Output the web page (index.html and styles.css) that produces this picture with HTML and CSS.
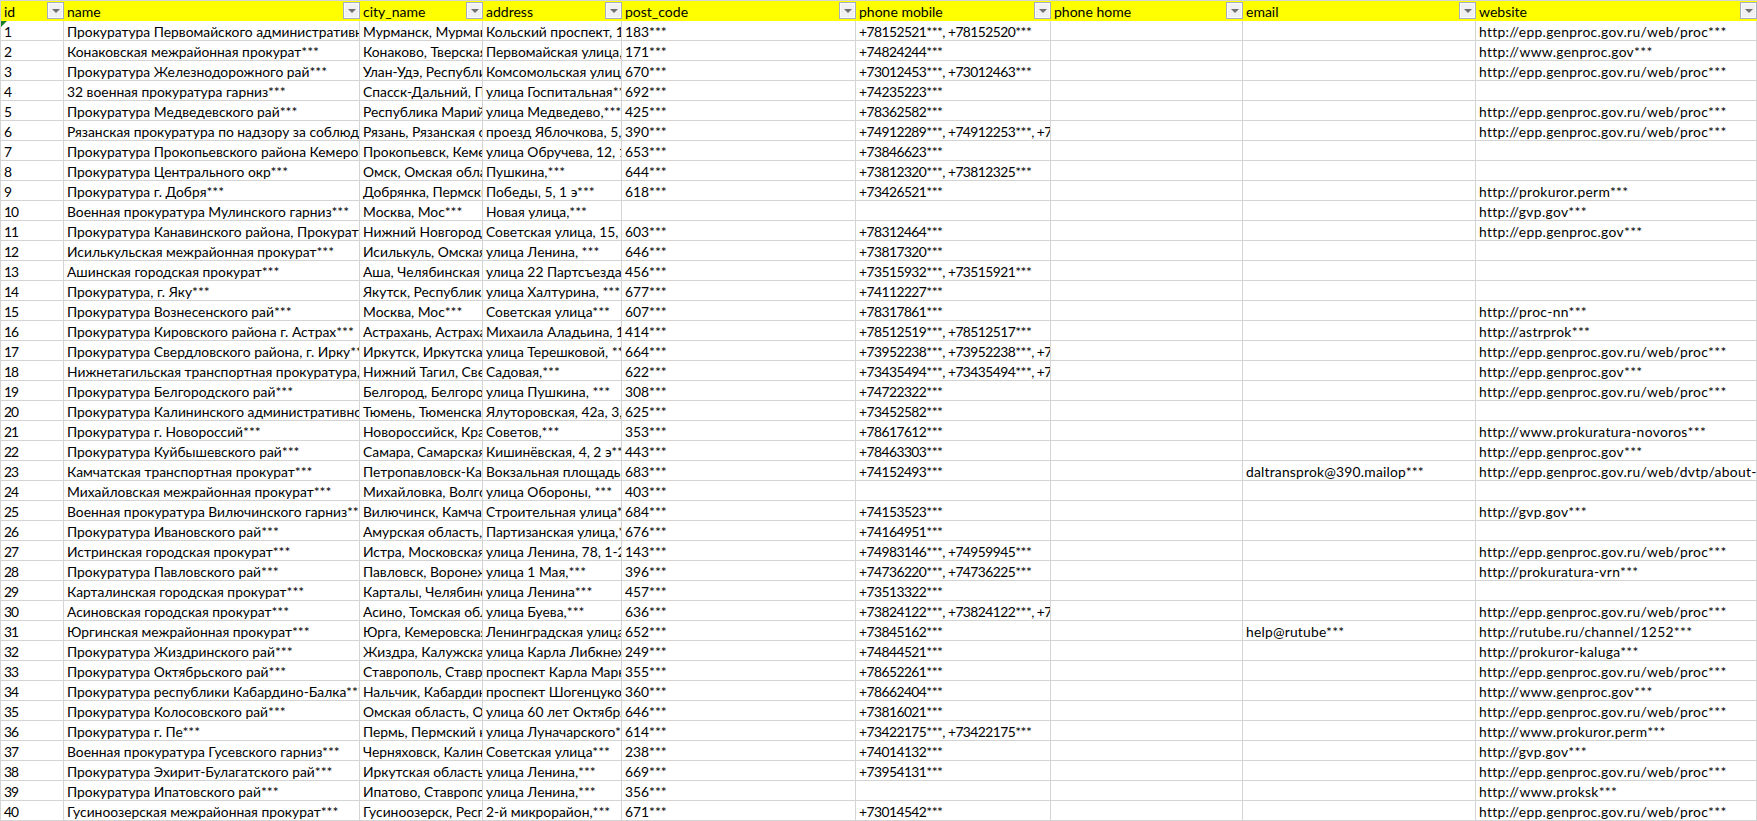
FILE: index.html
```html
<!DOCTYPE html>
<html lang="ru">
<head>
<meta charset="utf-8">
<title>Прокуратуры</title>
<link rel="stylesheet" href="styles.css">
</head>
<body>
<table class="sheet">
<colgroup><col class="c-id"><col class="c-name"><col class="c-city"><col class="c-addr"><col class="c-post"><col class="c-mob"><col class="c-home"><col class="c-mail"><col class="c-web"></colgroup>
<thead><tr>
<th><div class="hd"><span class="lbl">id</span><span class="fb"></span></div></th>
<th><div class="hd"><span class="lbl">name</span><span class="fb"></span></div></th>
<th><div class="hd"><span class="lbl">city_name</span><span class="fb"></span></div></th>
<th><div class="hd"><span class="lbl">address</span><span class="fb"></span></div></th>
<th><div class="hd"><span class="lbl">post_code</span><span class="fb"></span></div></th>
<th><div class="hd"><span class="lbl">phone mobile</span><span class="fb"></span></div></th>
<th><div class="hd"><span class="lbl">phone home</span><span class="fb"></span></div></th>
<th><div class="hd"><span class="lbl">email</span><span class="fb"></span></div></th>
<th><div class="hd"><span class="lbl">website</span><span class="fb"></span></div></th>
</tr></thead>
<tbody>
<tr><td class="first">1</td><td>Прокуратура Первомайского административного</td><td>Мурманск, Мурманская</td><td>Кольский проспект, 1</td><td>183***</td><td>+78152521***, +78152520***</td><td></td><td></td><td>http://epp.genproc.gov.ru/web/proc***</td></tr>
<tr><td>2</td><td>Конаковская межрайонная прокурат***</td><td>Конаково, Тверская</td><td>Первомайская улица, 1</td><td>171***</td><td>+74824244***</td><td></td><td></td><td>http://www.genproc.gov***</td></tr>
<tr><td>3</td><td>Прокуратура Железнодорожного рай***</td><td>Улан-Удэ, Республика</td><td>Комсомольская улица, 1</td><td>670***</td><td>+73012453***, +73012463***</td><td></td><td></td><td>http://epp.genproc.gov.ru/web/proc***</td></tr>
<tr><td>4</td><td>32 военная прокуратура гарниз***</td><td>Спасск-Дальний, Приморский</td><td>улица Госпитальная***</td><td>692***</td><td>+74235223***</td><td></td><td></td><td></td></tr>
<tr><td>5</td><td>Прокуратура Медведевского рай***</td><td>Республика Марий Эл</td><td>улица Медведево,***</td><td>425***</td><td>+78362582***</td><td></td><td></td><td>http://epp.genproc.gov.ru/web/proc***</td></tr>
<tr><td>6</td><td>Рязанская прокуратура по надзору за соблюдением</td><td>Рязань, Рязанская область</td><td>проезд Яблочкова, 5, 1</td><td>390***</td><td>+74912289***, +74912253***, +74912253***</td><td></td><td></td><td>http://epp.genproc.gov.ru/web/proc***</td></tr>
<tr><td>7</td><td>Прокуратура Прокопьевского района Кемеровской</td><td>Прокопьевск, Кемеровская</td><td>улица Обручева, 12, 1</td><td>653***</td><td>+73846623***</td><td></td><td></td><td></td></tr>
<tr><td>8</td><td>Прокуратура Центрального окр***</td><td>Омск, Омская область</td><td>Пушкина,***</td><td>644***</td><td>+73812320***, +73812325***</td><td></td><td></td><td></td></tr>
<tr><td>9</td><td>Прокуратура г. Добря***</td><td>Добрянка, Пермский</td><td>Победы, 5, 1 э***</td><td>618***</td><td>+73426521***</td><td></td><td></td><td>http://prokuror.perm***</td></tr>
<tr><td>10</td><td>Военная прокуратура Мулинского гарниз***</td><td>Москва, Мос***</td><td>Новая улица,***</td><td></td><td></td><td></td><td></td><td>http://gvp.gov***</td></tr>
<tr><td>11</td><td>Прокуратура Канавинского района, Прокуратура</td><td>Нижний Новгород, Нижегородская</td><td>Советская улица, 15, 2</td><td>603***</td><td>+78312464***</td><td></td><td></td><td>http://epp.genproc.gov***</td></tr>
<tr><td>12</td><td>Исилькульская межрайонная прокурат***</td><td>Исилькуль, Омская</td><td>улица Ленина, ***</td><td>646***</td><td>+73817320***</td><td></td><td></td><td></td></tr>
<tr><td>13</td><td>Ашинская городская прокурат***</td><td>Аша, Челябинская область</td><td>улица 22 Партсъезда***</td><td>456***</td><td>+73515932***, +73515921***</td><td></td><td></td><td></td></tr>
<tr><td>14</td><td>Прокуратура, г. Яку***</td><td>Якутск, Республика Саха</td><td>улица Халтурина, ***</td><td>677***</td><td>+74112227***</td><td></td><td></td><td></td></tr>
<tr><td>15</td><td>Прокуратура Вознесенского рай***</td><td>Москва, Мос***</td><td>Советская улица***</td><td>607***</td><td>+78317861***</td><td></td><td></td><td>http://proc-nn***</td></tr>
<tr><td>16</td><td>Прокуратура Кировского района г. Астрах***</td><td>Астрахань, Астраханская</td><td>Михаила Аладьина, 1</td><td>414***</td><td>+78512519***, +78512517***</td><td></td><td></td><td>http://astrprok***</td></tr>
<tr><td>17</td><td>Прокуратура Свердловского района, г. Ирку***</td><td>Иркутск, Иркутская</td><td>улица Терешковой, ***</td><td>664***</td><td>+73952238***, +73952238***, +73952238***</td><td></td><td></td><td>http://epp.genproc.gov.ru/web/proc***</td></tr>
<tr><td>18</td><td>Нижнетагильская транспортная прокуратура,</td><td>Нижний Тагил, Свердловская</td><td>Садовая,***</td><td>622***</td><td>+73435494***, +73435494***, +73435494***</td><td></td><td></td><td>http://epp.genproc.gov***</td></tr>
<tr><td>19</td><td>Прокуратура Белгородского рай***</td><td>Белгород, Белгородская</td><td>улица Пушкина, ***</td><td>308***</td><td>+74722322***</td><td></td><td></td><td>http://epp.genproc.gov.ru/web/proc***</td></tr>
<tr><td>20</td><td>Прокуратура Калининского административного</td><td>Тюмень, Тюменская область</td><td>Ялуторовская, 42а, 3, 1</td><td>625***</td><td>+73452582***</td><td></td><td></td><td></td></tr>
<tr><td>21</td><td>Прокуратура г. Новороссий***</td><td>Новороссийск, Краснодарский</td><td>Советов,***</td><td>353***</td><td>+78617612***</td><td></td><td></td><td>http://www.prokuratura-novoros***</td></tr>
<tr><td>22</td><td>Прокуратура Куйбышевского рай***</td><td>Самара, Самарская область</td><td>Кишинёвская, 4, 2 э***</td><td>443***</td><td>+78463303***</td><td></td><td></td><td>http://epp.genproc.gov***</td></tr>
<tr><td>23</td><td>Камчатская транспортная прокурат***</td><td>Петропавловск-Камчатский</td><td>Вокзальная площадь, 1</td><td>683***</td><td>+74152493***</td><td></td><td>daltransprok@390.mailop***</td><td>http://epp.genproc.gov.ru/web/dvtp/about-</td></tr>
<tr><td>24</td><td>Михайловская межрайонная прокурат***</td><td>Михайловка, Волгоградская</td><td>улица Обороны, ***</td><td>403***</td><td></td><td></td><td></td><td></td></tr>
<tr><td>25</td><td>Военная прокуратура Вилючинского гарниз***</td><td>Вилючинск, Камчатский</td><td>Строительная улица***</td><td>684***</td><td>+74153523***</td><td></td><td></td><td>http://gvp.gov***</td></tr>
<tr><td>26</td><td>Прокуратура Ивановского рай***</td><td>Амурская область, Ивановка</td><td>Партизанская улица,***</td><td>676***</td><td>+74164951***</td><td></td><td></td><td></td></tr>
<tr><td>27</td><td>Истринская городская прокурат***</td><td>Истра, Московская область</td><td>улица Ленина, 78, 1-2</td><td>143***</td><td>+74983146***, +74959945***</td><td></td><td></td><td>http://epp.genproc.gov.ru/web/proc***</td></tr>
<tr><td>28</td><td>Прокуратура Павловского рай***</td><td>Павловск, Воронежская</td><td>улица 1 Мая,***</td><td>396***</td><td>+74736220***, +74736225***</td><td></td><td></td><td>http://prokuratura-vrn***</td></tr>
<tr><td>29</td><td>Карталинская городская прокурат***</td><td>Карталы, Челябинская</td><td>улица Ленина***</td><td>457***</td><td>+73513322***</td><td></td><td></td><td></td></tr>
<tr><td>30</td><td>Асиновская городская прокурат***</td><td>Асино, Томская область</td><td>улица Буева,***</td><td>636***</td><td>+73824122***, +73824122***, +73824122***</td><td></td><td></td><td>http://epp.genproc.gov.ru/web/proc***</td></tr>
<tr><td>31</td><td>Юргинская межрайонная прокурат***</td><td>Юрга, Кемеровская область</td><td>Ленинградская улица, 1</td><td>652***</td><td>+73845162***</td><td></td><td>help@rutube***</td><td>http://rutube.ru/channel/1252***</td></tr>
<tr><td>32</td><td>Прокуратура Жиздринского рай***</td><td>Жиздра, Калужская область</td><td>улица Карла Либкнехта</td><td>249***</td><td>+74844521***</td><td></td><td></td><td>http://prokuror-kaluga***</td></tr>
<tr><td>33</td><td>Прокуратура Октябрьского рай***</td><td>Ставрополь, Ставропольский</td><td>проспект Карла Маркса</td><td>355***</td><td>+78652261***</td><td></td><td></td><td>http://epp.genproc.gov.ru/web/proc***</td></tr>
<tr><td>34</td><td>Прокуратура республики Кабардино-Балка***</td><td>Нальчик, Кабардино-Балкарская</td><td>проспект Шогенцукова</td><td>360***</td><td>+78662404***</td><td></td><td></td><td>http://www.genproc.gov***</td></tr>
<tr><td>35</td><td>Прокуратура Колосовского рай***</td><td>Омская область, Омск</td><td>улица 60 лет Октября, 1</td><td>646***</td><td>+73816021***</td><td></td><td></td><td>http://epp.genproc.gov.ru/web/proc***</td></tr>
<tr><td>36</td><td>Прокуратура г. Пе***</td><td>Пермь, Пермский край</td><td>улица Луначарского***</td><td>614***</td><td>+73422175***, +73422175***</td><td></td><td></td><td>http://www.prokuror.perm***</td></tr>
<tr><td>37</td><td>Военная прокуратура Гусевского гарниз***</td><td>Черняховск, Калининградская</td><td>Советская улица***</td><td>238***</td><td>+74014132***</td><td></td><td></td><td>http://gvp.gov***</td></tr>
<tr><td>38</td><td>Прокуратура Эхирит-Булагатского рай***</td><td>Иркутская область, Усть</td><td>улица Ленина,***</td><td>669***</td><td>+73954131***</td><td></td><td></td><td>http://epp.genproc.gov.ru/web/proc***</td></tr>
<tr><td>39</td><td>Прокуратура Ипатовского рай***</td><td>Ипатово, Ставропольский</td><td>улица Ленина,***</td><td>356***</td><td></td><td></td><td></td><td>http://www.proksk***</td></tr>
<tr><td>40</td><td>Гусиноозерская межрайонная прокурат***</td><td>Гусиноозерск, Республика</td><td>2-й микрорайон,***</td><td>671***</td><td>+73014542***</td><td></td><td></td><td>http://epp.genproc.gov.ru/web/proc***</td></tr>
</tbody>
</table>
</body>
</html>
```
FILE: styles.css
```css
html, body { margin: 0; padding: 0; background: #fff; overflow: hidden; }
.sheet {
  table-layout: fixed;
  border-collapse: separate;
  border-spacing: 0;
  width: 1757px;
  border-top: 1px solid #d4d4d4;
  border-left: 1px solid #d4d4d4;
  font-family: "Lato", "Open Sans", sans-serif;
  font-size: 14px;
  color: #000;
}
.c-id { width: 63px; }
.c-name { width: 296px; }
.c-city { width: 123px; }
.c-addr { width: 139px; }
.c-post { width: 234px; }
.c-mob { width: 195px; }
.c-home { width: 192px; }
.c-mail { width: 233px; }
.c-web { width: 281px; }

th {
  height: 20px;
  padding: 0;
  background: #ffff00;
  font-weight: 400;
  text-align: left;
}
.hd { display: flex; align-items: center; height: 20px; }
.lbl {
  flex: 1;
  min-width: 0;
  padding: 1px 0 0 3px;
  white-space: nowrap;
  overflow: hidden;
}
.fb {
  flex: none;
  box-sizing: border-box;
  width: 17px;
  height: 17px;
  display: flex;
  align-items: center;
  justify-content: center;
  background: #f0f0f0;
  border: 1px solid #a6aebd;
  box-shadow: inset 0 0 0 1px #fafafa;
  margin-bottom: 1px;
}
.fb::after {
  content: "";
  border-left: 4px solid transparent;
  border-right: 4px solid transparent;
  border-top: 4px solid #6f6f6f;
}
td {
  height: 17px;
  padding: 2px 0 0 3px;
  box-sizing: content-box;
  border-right: 1px solid #d4d4d4;
  border-bottom: 1px solid #d4d4d4;
  white-space: nowrap;
  overflow: hidden;
  font-size: 13.85px;
  line-height: 17px;
}
td:nth-child(1) { letter-spacing: -1px; }
td:nth-child(6) { letter-spacing: -0.55px; }
td:nth-child(8) { letter-spacing: 0.21px; }
td:nth-child(9) { letter-spacing: 0.32px; }
td.first { position: relative; }
td.first::before {
  content: "";
  position: absolute;
  left: 0;
  top: 0;
  border-top: 6px solid #1a7f28;
  border-right: 6px solid transparent;
}
```
